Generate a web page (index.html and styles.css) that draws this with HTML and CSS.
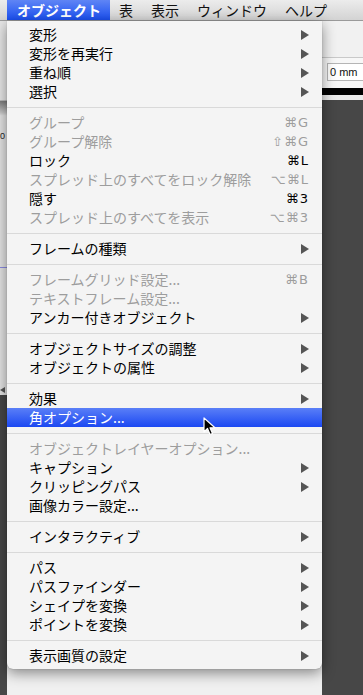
FILE: index.html
```html
<!DOCTYPE html>
<html lang="ja">
<head>
  <meta charset="UTF-8" />
  <title>オブジェクト メニュー</title>
  <link rel="stylesheet" href="styles.css">
</head>
<body>

  <!-- MENU BAR -->
  <div class="menubar">
    <span class="mb-item active">オブジェクト</span>
    <span class="mb-item">表</span>
    <span class="mb-item">表示</span>
    <span class="mb-item">ウィンドウ</span>
    <span class="mb-item">ヘルプ</span>
  </div>

  <!-- APP BEHIND THE MENU -->
  <div class="app">
    <div class="side-left">
      <div class="sl-top"></div>
      <div class="sl-ruler"><span class="ruler-num">0</span><span class="ruler-line"></span><span class="ruler-arrow"></span></div>
      <div class="sl-dark"></div>
    </div>
    <div class="app-mid"></div>
    <div class="side-right">
      <div class="sr-top"></div>
      <div class="sr-ctrl"><span class="mm-field">0 mm</span></div>
      <div class="sr-black"></div>
      <div class="sr-gap"></div>
      <div class="sr-dark"></div>
    </div>
  </div>

  <!-- DROPDOWN -->
  <div class="menu">
    <div class="item sub">変形</div>
    <div class="item sub">変形を再実行</div>
    <div class="item sub">重ね順</div>
    <div class="item sub">選択</div>
    <div class="sep"></div>
    <div class="item off"><span>グループ</span><span class="key">⌘G</span></div>
    <div class="item off"><span>グループ解除</span><span class="key">⇧⌘G</span></div>
    <div class="item"><span>ロック</span><span class="key">⌘L</span></div>
    <div class="item off"><span>スプレッド上のすべてをロック解除</span><span class="key">⌥⌘L</span></div>
    <div class="item"><span>隠す</span><span class="key">⌘3</span></div>
    <div class="item off"><span>スプレッド上のすべてを表示</span><span class="key">⌥⌘3</span></div>
    <div class="sep"></div>
    <div class="item sub">フレームの種類</div>
    <div class="sep"></div>
    <div class="item off"><span>フレームグリッド設定...</span><span class="key">⌘B</span></div>
    <div class="item off">テキストフレーム設定...</div>
    <div class="item sub">アンカー付きオブジェクト</div>
    <div class="sep"></div>
    <div class="item sub">オブジェクトサイズの調整</div>
    <div class="item sub">オブジェクトの属性</div>
    <div class="sep"></div>
    <div class="item sub">効果</div>
    <div class="item hot">角オプション...</div>
    <div class="sep"></div>
    <div class="item off">オブジェクトレイヤーオプション...</div>
    <div class="item sub">キャプション</div>
    <div class="item sub">クリッピングパス</div>
    <div class="item">画像カラー設定...</div>
    <div class="sep"></div>
    <div class="item sub">インタラクティブ</div>
    <div class="sep"></div>
    <div class="item sub">パス</div>
    <div class="item sub">パスファインダー</div>
    <div class="item sub">シェイプを変換</div>
    <div class="item sub">ポイントを変換</div>
    <div class="sep"></div>
    <div class="item sub">表示画質の設定</div>
  </div>

  <!-- mouse pointer -->
  <svg class="cursor" width="14" height="20" viewBox="0 0 14 20">
    <path d="M1 1 L1 15 L4.5 11.5 L7 17.5 L9.5 16.5 L7 10.8 L12 10.8 Z" fill="#000" stroke="#fff" stroke-width="1.2" stroke-linejoin="round"/>
  </svg>

</body>
</html>
```

FILE: styles.css
```css
html, body { margin: 0; padding: 0; }
body {
  width: 363px; height: 695px; overflow: hidden; position: relative;
  font-family: "Noto Sans CJK JP", "DejaVu Sans", sans-serif;
  background: #464646;
}

/* menu bar */
.menubar {
  height: 21px; display: flex; align-items: stretch;
  background: linear-gradient(#ececec, #d3d3d3);
  border-bottom: 1px solid #9a9a9a; box-sizing: border-box;
  padding-left: 7px;
}
.mb-item { font-size: 14px; line-height: 21px; color: #111; padding: 0 9px; }
.mb-item.active {
  width: 84px; padding: 0 9px 0 10px; font-weight: bold; color: #fff;
  background: linear-gradient(#5f85f5, #1a4ff0);
}

/* background application */
.app { display: flex; height: 674px; }
.side-left { width: 7px; display: flex; flex-direction: column; }
.sl-top { height: 79px; background: #e6e6e6; border-bottom: 1px solid #bbb; }
.sl-dark, .sr-dark { flex: 1; background: #474747; }
.sl-ruler {
  height: 294px; background: linear-gradient(#7c7c7c, #c8c8c8 4%, #e3e3e3 5%);
  position: relative;
}
.ruler-num { position: absolute; top: 30px; left: 0; font: 9px "Liberation Sans", sans-serif; color: #222; }
.ruler-line { position: absolute; top: 166px; left: 0; width: 7px; height: 1px; background: #8a8ae0; }
.ruler-arrow {
  position: absolute; bottom: 2px; left: 0; width: 0; height: 0;
  border-right: 5px solid #555; border-top: 3px solid transparent; border-bottom: 3px solid transparent;
}
.app-mid { flex: 1; background: #f0f0f0; }
.side-right { width: 41px; display: flex; flex-direction: column; }
.sr-top { height: 36px; background: #f1f1f1; border-bottom: 1px solid #c9c9c9; }
.sr-ctrl { height: 30px; background: #f7f7f7; padding: 5px 0 0 5px; box-sizing: border-box; }
.mm-field {
  display: block; height: 16px; border: 1px solid #b5b5b5; border-right: 0; background: #fff;
  font: 11px/16px "Liberation Sans", sans-serif; color: #111; padding-left: 2px;
}
.sr-black { height: 7px; background: #000; }
.sr-gap { height: 5px; background: #eaeaea; }

/* dropdown */
.menu {
  position: absolute; left: 7px; top: 21px; width: 315px;
  background: #f4f4f4; padding: 4px 0;
  border-radius: 0 0 6px 6px;
  box-shadow: 0 4px 14px rgba(0,0,0,.45), 0 0 1px rgba(0,0,0,.4);
}
.item {
  height: 19px; line-height: 19px; font-size: 14px; color: #000;
  padding: 0 13px 0 22px; display: flex; justify-content: space-between; align-items: center;
  white-space: nowrap;
}
.item.off { color: #9d9d9d; }
.item.hot { color: #fff; background: linear-gradient(#5a7ff7, #1b48f2); }
.item.sub::after {
  content: ""; width: 0; height: 0;
  border-left: 8px solid #555; border-top: 5px solid transparent; border-bottom: 5px solid transparent;
}
.key { font-family: "DejaVu Sans", sans-serif; font-size: 13px; letter-spacing: 1px; }
.sep { height: 12px; display: flex; align-items: center; }
.sep::before { content: ""; flex: 1; height: 1px; background: #d9d9d9; }

.cursor { position: absolute; left: 203px; top: 417px; }
```
